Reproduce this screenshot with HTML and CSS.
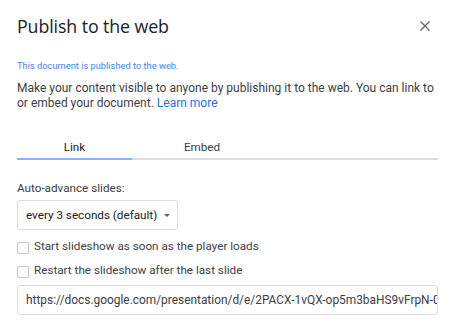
FILE: index.html
```html
<!DOCTYPE html>
<html>
<head>
<meta charset="utf-8">
<link rel="stylesheet" href="styles.css">
</head>
<body>
<div class="dialog">
  <div class="header">
    <h1 class="title">Publish to the web</h1>
    <button class="close" aria-label="Close">
      <svg width="10" height="10" viewBox="0 0 10 10"><path d="M0.5 0.5L9.5 9.5M9.5 0.5L0.5 9.5" stroke="#5f6368" stroke-width="1.3" fill="none"/></svg>
    </button>
  </div>
  <p class="status">This document is published to the web.</p>
  <p class="desc">Make your content visible to anyone by publishing it to the web. You can link to or embed your document. <a class="link" href="#">Learn more</a></p>
  <div class="tabs">
    <div class="tab active">Link</div>
    <div class="tab">Embed</div>
  </div>
  <div class="label">Auto-advance slides:</div>
  <div class="select">
    <span>every 3 seconds (default)</span>
    <span class="caret"></span>
  </div>
  <label class="check first"><span class="box"></span>Start slideshow as soon as the player loads</label>
  <label class="check"><span class="box"></span>Restart the slideshow after the last slide</label>
  <div class="url">https://docs.google.com/presentation/d/e/2PACX-1vQX-op5m3baHS9vFrpN-0</div>
</div>
</body>
</html>
```
FILE: styles.css
```css
html, body { margin: 0; padding: 0; background: #fff; }
body { font-family: Roboto, "Liberation Sans", sans-serif; color: #202124; }
.dialog { width: 421px; padding: 0 14px 0 17px; }
.header { display: flex; justify-content: space-between; align-items: center; height: 50px; }
.title { margin: 2px 0 0 0; font-family: "Open Sans", Roboto, sans-serif; font-weight: 400; font-size: 17.8px; color: #202124; letter-spacing: -0.1px; }
.close { background: none; border: 0; padding: 0; margin: 2px 8px 0 0; width: 10px; height: 10px; display: flex; }
.status { margin: 10px 0 0 0; font-size: 9.3px; color: #4285f4; line-height: 12px; }
.desc { margin: 9px 0 0 0; font-size: 12px; line-height: 15px; color: #3c4043; }
.link { color: #1a73e8; text-decoration: none; }
.tabs { display: flex; margin-top: 29px; border-bottom: 2px solid #dadce0; }
.tab { width: 115px; text-align: center; font-size: 11.7px; line-height: 14px; color: #3c4043; padding-bottom: 4px; margin-bottom: -2px; }
.tab + .tab { width: 140px; }
.tab.active { color: #202124; border-bottom: 2px solid #8ab4f8; }
.label { margin-top: 21px; font-size: 11.7px; line-height: 14px; color: #3c4043; }
.select { margin-top: 5px; width: 161px; height: 30px; box-sizing: border-box; border: 1px solid #dadce0; border-radius: 3px; display: flex; align-items: center; padding: 0 0 0 8px; font-size: 11.7px; color: #202124; gap: 7px; }
.caret { width: 0; height: 0; border-left: 3px solid transparent; border-right: 3px solid transparent; border-top: 3px solid #5f6368; margin-top: 1px; }
.check { display: flex; align-items: center; gap: 5px; font-size: 11.7px; color: #3c4043; height: 14px; margin-top: 10px; }
.check.first { margin-top: 9px; }
.box { width: 10px; height: 10px; border: 1px solid #c8c8c8; border-radius: 1px; margin-top: 3px; }
.url { margin-top: 8px; width: 421px; height: 30px; box-sizing: border-box; border: 1px solid #dadce0; border-radius: 3px; padding: 0 0 0 8px; font-size: 11.9px; line-height: 28px; color: #3c4043; white-space: nowrap; overflow: hidden; }
```
